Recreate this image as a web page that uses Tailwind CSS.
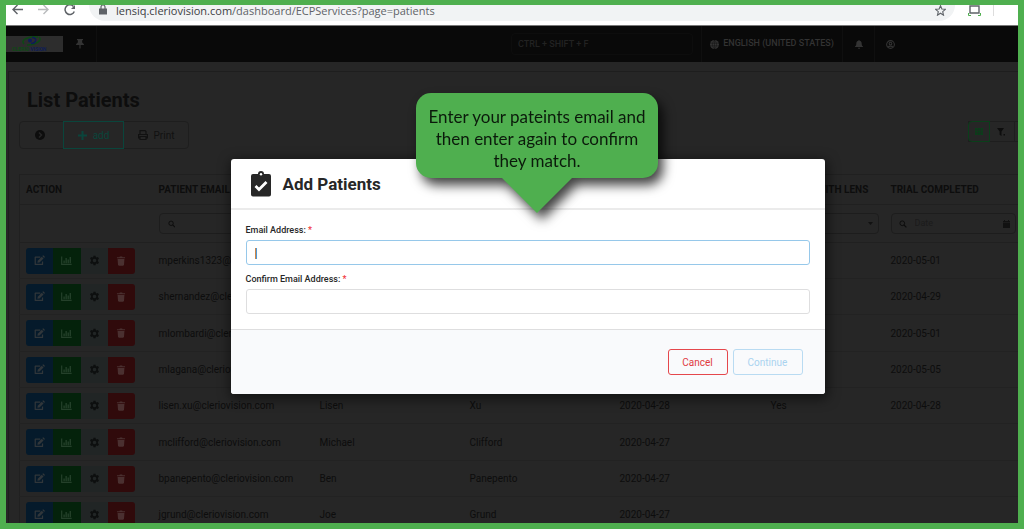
<!DOCTYPE html>
<html lang="en">

<head>
    <meta charset="UTF-8" />
    <meta name="viewport" content="width=device-width, initial-scale=1" />
    <title>List Patients</title>
    <script src="https://cdn.jsdelivr.net/npm/@tailwindcss/browser@4"></script>
</head>

<body class="relative flex h-screen flex-col overflow-hidden border-[6px] border-t-[5px] border-[#4faf4f] bg-[#262626] font-['Roboto',sans-serif] text-[#0d0d0d]">

    <!-- icons -->
    <svg class="hidden">
        <symbol id="i-edit" viewBox="0 0 16 16">
            <path d="M9.2 3.2H1.8v10.600h10.600V9.600" fill="none" stroke="currentColor" stroke-width="1.800" stroke-linejoin="round" />
            <path d="M5.400 8.300 11.300 2.400l2.600 2.600L8 10.900l-3 .4zM12.100 1.600l.7-.7c.4-.4 1-.4 1.400 0l1.200 1.200c.4.4.4 1 0 1.400l-.7.7z" fill="currentColor" />
        </symbol>
        <symbol id="i-chart" viewBox="0 0 16 16">
            <path d="M1 2v11.500h14.500" fill="none" stroke="currentColor" stroke-width="1.800" />
            <path d="M3.500 8h2v4h-2zM6.500 4.500h2V12h-2zM9.500 6.500h2V12h-2zM12.500 3h2v9h-2z" fill="currentColor" />
        </symbol>
        <symbol id="i-gear" viewBox="0 0 16 16">
            <path fill="currentColor" fill-rule="evenodd" d="M6.500 1h3l.4 1.900 1.200.7 1.900-.6 1.500 2.600L13 6.900v2.200l1.500 1.300-1.500 2.600-1.900-.6-1.200.7-.4 1.900h-3l-.4-1.900-1.200-.7-1.900.6-1.500-2.600L3 9.100V6.900L1.500 5.600 3 3l1.900.6 1.200-.7zM8 5.400a2.600 2.600 0 1 0 0 5.200 2.600 2.600 0 0 0 0-5.200z" />
        </symbol>
        <symbol id="i-trash" viewBox="0 0 16 16">
            <path fill="currentColor" d="M1.500 1.800h4l.6-1h3.800l.6 1h4v1.900h-13zM2.500 4.600h11l-.7 9.500c-.1.7-.7 1.300-1.500 1.300H4.700c-.8 0-1.400-.6-1.500-1.300z" />
        </symbol>
        <symbol id="i-search" viewBox="0 0 16 16">
            <circle cx="6.500" cy="6.500" r="4.700" fill="none" stroke="currentColor" stroke-width="2" />
            <path d="m10 10 4.800 4.800" stroke="currentColor" stroke-width="2.400" />
        </symbol>
    </svg>

    <!-- browser bar -->
    <div class="flex h-[21px] shrink-0 items-start border-b border-[#777] bg-white pl-[6px] text-[#5f6368]">
        <svg class="h-[11px] w-[11px]" viewBox="0 0 11 11" fill="none" stroke="#5f6368" stroke-width="1.400">
            <path d="M11 4.500H1M5.500 0 1 4.500 5.500 9" />
        </svg>
        <svg class="ml-[15px] h-[11px] w-[11px]" viewBox="0 0 11 11" fill="none" stroke="#b9bbbd" stroke-width="1.400">
            <path d="M0 4.500h10M5.500 0 10 4.500 5.500 9" />
        </svg>
        <svg class="ml-[15px] h-[11px] w-[12px]" viewBox="0 0 12 11" fill="none" stroke="#5f6368" stroke-width="1.500">
            <path d="M9.500 1.500A4.800 4.800 0 1 0 10.300 6.500" />
            <path d="M11 0v4H7z" fill="#5f6368" stroke="none" />
        </svg>
        <div class="ml-[13px] flex h-4 flex-1 items-start rounded-b-full bg-[#f1f3f4] pl-[10px] pr-[9px]">
            <svg class="h-[10px] w-[8px]" viewBox="0 0 8 10">
                <path fill="#5f6368" d="M0 3.500h8v6H0z" />
                <path d="M2 4V2a2 2 0 0 1 4 0v2" fill="none" stroke="#5f6368" stroke-width="1.200" />
            </svg>
            <p class="-mt-[2px] ml-[9px] flex-1 font-['Open_Sans',sans-serif] text-[11px] leading-[15px]"><span class="text-[#3c4043]">lensiq.cleriovision.com</span>/dashboard/ECPServices?page=patients</p>
            <svg class="h-[11px] w-[11px]" viewBox="0 0 12 12" fill="none" stroke="#5f6368" stroke-width="1.200">
                <path d="m6 .8 1.500 3.600 3.900.3-3 2.500.9 3.900L6 9l-3.300 2.100.9-3.900-3-2.500 3.900-.3z" />
            </svg>
        </div>
        <svg class="ml-[13px] h-[11px] w-[13px]" viewBox="0 0 13 11" fill="none">
            <path d="M2 1h9v7H2z" stroke="#5f6368" stroke-width="1.400" />
            <path d="M.5 8v2.500H3M12.500 8v2.500H10" stroke="#4faf4f" />
        </svg>
        <span class="ml-[12px] mr-[24px] h-[11px] w-px bg-[#ddd]"></span>
    </div>

    <!-- top navigation -->
    <nav class="flex h-9 shrink-0 items-center bg-[#090909] text-[9px] font-medium text-[#333]">
        <svg class="h-4 w-[57px] bg-[#2d2d2d]" viewBox="0 0 57 16">
            <g fill="none" stroke-width="1.500">
                <path d="M18 8C14 4 22 0 32 1" stroke="#0c4a14" />
                <path d="M33 1c4 3-3 8-12 8" stroke="#0c4a14" />
                <path d="M26 1.500c6 0 4 6-1 6" stroke="#0d1d58" />
            </g>
            <circle cx="24" cy="4.500" r="2" fill="#0d1d58" />
            <text x="6" y="15" font-size="5" font-weight="700" fill="#0c4a14">CLERIO <tspan fill="#0d1d58">VISION</tspan></text>
        </svg>
        <span class="flex h-full w-[34px] items-center justify-center border-r border-[#0f0f0f]">
            <svg class="h-[10px] w-[8px]" viewBox="0 0 8 10" fill="currentColor">
                <path d="M1 0h6v1.300H6l.3 2.500C7.300 4.300 8 5 8 6H4.600v3L4 10l-.6-1V6H0c0-1 .7-1.700 1.700-2.200L2 1.300H1z" />
            </svg>
        </span>
        <input type="text" aria-label="Search" placeholder="CTRL + SHIFT + F"
            class="ml-auto h-[22px] w-[182px] rounded-sm border border-[#0d0d0d] px-[6px] placeholder:text-[#222]" />
        <button class="ml-2 flex h-full w-[142px] items-center justify-center gap-1 whitespace-nowrap border-x border-[#0f0f0f]">
            <svg class="h-[9px] w-[9px] shrink-0" viewBox="0 0 10 10">
                <circle cx="5" cy="5" r="5" fill="currentColor" />
                <path d="M0 3.500h10M0 6.500h10M5 0v10M5 0C2 3 2 7 5 10M5 0c3 3 3 7 0 10" fill="none" stroke="#090909" stroke-width=".4" />
            </svg>
            ENGLISH (UNITED STATES)
        </button>
        <button aria-label="Notifications" class="flex h-full w-8 items-center justify-center border-r border-[#0f0f0f]">
            <svg class="h-[9px] w-2" viewBox="0 0 8 9" fill="currentColor">
                <path d="M4 0c.4 0 .6.300.6.700C6 1 6.700 2 6.700 3.500c0 1.800.5 2.300 1.300 3V7H0v-.5c.8-.7 1.300-1.200 1.300-3C1.300 2 2 1 3.400.700 3.400.300 3.600 0 4 0zM3 7.700h2C5 9.300 3 9.300 3 7.700z" />
            </svg>
        </button>
        <button aria-label="Account" class="mr-[123px] ml-[11px]">
            <svg class="h-[9px] w-[9px]" viewBox="0 0 10 10" fill="none" stroke="currentColor" stroke-width="1.200">
                <circle cx="5" cy="5" r="4.300" />
                <circle cx="5" cy="4" r="1.500" />
                <path d="M2.300 8C3 6.400 7 6.400 7.700 8" />
            </svg>
        </button>
    </nav>

    <!-- patients list -->
    <main class="mt-[9px] ml-[2px] flex-1 overflow-hidden border-t border-l border-[#1e1e1e] pl-[10px]">
        <h1 class="mt-[15px] ml-2 text-[20px] leading-[26px] font-bold">List Patients</h1>
        <div class="mt-2 flex items-start justify-between text-[10px] text-[#111]">
            <div class="flex h-7 rounded-sm border border-[#1e1e1e]">
                <button aria-label="Next" class="flex w-[43px] items-center justify-center pr-1">
                    <svg class="h-[10px] w-[10px]" viewBox="0 0 10 10">
                        <circle cx="5" cy="5" r="5" fill="#0d0d0d" />
                        <path d="M4 2.500 6.500 5 4 7.500" fill="none" stroke="#262626" stroke-width="1.500" />
                    </svg>
                </button>
                <button class="-my-px flex w-[61px] items-center justify-center gap-[6px] border border-[#0a453c] text-[#0a453c]">
                    <svg class="h-[9px] w-[9px]" viewBox="0 0 9 9" stroke="currentColor" stroke-width="2">
                        <path d="M4.500 0v9M0 4.500h9" />
                    </svg>
                    add
                </button>
                <button class="flex w-16 items-center justify-center gap-[6px]">
                    <svg class="h-[10px] w-[10px]" viewBox="0 0 10 10" fill="none" stroke="currentColor" stroke-width="1.200">
                        <path d="M2 4V.6h5L8 1.600V4M2 7.800H.6V4.500h8.800v3.300H8M2 6.500h6v3H2z" />
                    </svg>
                    Print
                </button>
            </div>
            <div class="flex h-[21px] border border-r-0 border-[#1e1e1e]">
                <button aria-label="Grid view" class="-m-px flex w-[22px] items-center justify-center rounded-l-sm border border-[#0a3f1a] text-[#0a3f1a]">
                    <svg class="h-[7px] w-2" viewBox="0 0 8 7">
                        <path fill="currentColor" d="M0 0h8v7H0z" />
                        <path d="M2.600 0v7M5.400 0v7M0 2.300h8M0 4.700h8" stroke="#262626" stroke-width=".5" />
                    </svg>
                </button>
                <button aria-label="Clear filter" class="flex w-[26px] items-center justify-center border-r border-[#1e1e1e]">
                    <svg class="h-2 w-[9px]" viewBox="0 0 9 8" fill="#0d0d0d">
                        <path d="M0 0h7L4.500 3.500V8L2.600 6.700V3.500zM6.500 6H8v1.500H6.500z" />
                    </svg>
                </button>
                <span class="w-[3px]"></span>
            </div>
        </div>

        <table class="mt-[25px] w-full table-fixed border-t border-l border-[#202020] text-left text-[10px]">
            <colgroup>
                <col class="w-[133px]" />
                <col class="w-[161px]" />
                <col class="w-[150px]" />
                <col class="w-[150px]" />
                <col class="w-[151px]" />
                <col class="w-[120px]" />
                <col />
            </colgroup>
            <thead>
                <tr class="h-[30px] border-b border-[#202020] whitespace-nowrap *:px-[6px] *:font-bold">
                    <th>ACTION</th>
                    <th>PATIENT EMAIL</th>
                    <th>FIRST NAME</th>
                    <th>LAST NAME</th>
                    <th>TRIAL START</th>
                    <th>SUCCESS WITH LENS</th>
                    <th>TRIAL COMPLETED</th>
                </tr>
                <tr class="h-[38px] border-b border-[#202020] *:px-[6px]">
                    <td></td>
                    <td>
                        <label class="flex h-[21px] items-center rounded-sm border border-[#1d1d1d] px-2">
                            <svg class="h-2 w-2"><use href="#i-search" /></svg>
                            <input type="text" aria-label="Filter by email" class="w-full" />
                        </label>
                    </td>
                    <td></td>
                    <td></td>
                    <td></td>
                    <td>
                        <div class="relative">
                            <select aria-label="Filter by lens" class="block h-[21px] w-full appearance-none rounded-sm border border-[#1d1d1d]">
                                <option></option>
                                <option>Yes</option>
                                <option>No</option>
                            </select>
                            <svg class="absolute top-[9px] right-[6px] h-[3px] w-[5px]" viewBox="0 0 5 3"><path d="M0 0h5L2.500 3z" fill="#111" /></svg>
                        </div>
                    </td>
                    <td class="pr-[2px]!">
                        <label class="flex h-[21px] items-center gap-2 rounded-sm border border-[#1d1d1d] pr-[5px] pl-[7px]">
                            <svg class="h-2 w-2 shrink-0"><use href="#i-search" /></svg>
                            <input type="text" placeholder="Date" aria-label="Filter by date" class="w-full min-w-0 text-[9px] placeholder:text-[#1b1b1b]" />
                            <svg class="h-2 w-[7px] shrink-0" viewBox="0 0 7 8"><path d="M0 1h1V0h1v1h3V0h1v1h1v1.200H0zM0 2.700h7V8H0z" fill="#111" /></svg>
                        </label>
                    </td>
                </tr>
            </thead>
            <tbody id="patients"></tbody>
        </table>
    </main>

    <!-- add patients dialog -->
    <div class="absolute inset-0 flex items-start justify-center pt-[154px] pl-[31px]">
        <form id="formAdd" role="dialog" aria-labelledby="dialogTitle" class="w-[594px] overflow-hidden rounded-[3px] bg-white text-[#272727] shadow-[1px_3px_12px_2px_rgba(0,0,0,0.5)]">
            <div class="flex h-[51px] items-center gap-3 border-b-2 border-[#ebebeb] pl-5">
                <svg class="h-[26px] w-5" viewBox="0 0 20 26">
                    <path fill="#272727" d="M2 3h5a3 3 0 0 1 6 0h5a2 2 0 0 1 2 2v18.500a2 2 0 0 1-2 2H2a2 2 0 0 1-2-2V5a2 2 0 0 1 2-2z" />
                    <circle cx="10" cy="3.300" r="1.200" fill="#fff" />
                    <path d="m4.500 15 3.500 3.500 7.500-7.500" fill="none" stroke="#fff" stroke-width="2.800" />
                </svg>
                <h2 id="dialogTitle" class="text-[17px] leading-6 font-bold">Add Patients</h2>
            </div>
            <div class="px-[15px] pt-[14px] pb-[15px] text-[9px] leading-3 font-medium">
                <label for="email" class="block">Email Address: <span class="align-top text-[#f03338]">*</span></label>
                <input type="text" id="email" value="|"
                    class="mt-1 block h-[25px] w-full rounded-[3px] border border-[#96c8ea] px-2 text-xs font-normal text-black focus:outline-none" />
                <label for="confirmEmail" class="mt-2 block">Confirm Email Address: <span class="align-top text-[#f03338]">*</span></label>
                <input type="text" id="confirmEmail"
                    class="mt-1 block h-[25px] w-full rounded-[3px] border border-[#dededf] px-2 text-xs font-normal focus:outline-none" />
            </div>
            <div class="flex justify-end gap-[5px] border-t border-[#dededf] bg-[#f9fafc] pt-[19px] pr-[22px] pb-[19px] text-[10px]">
                <button type="button" class="h-[26px] w-[60px] rounded-[3px] border border-[#e5474c] text-[#e0393e]">Cancel</button>
                <button type="submit" class="h-[26px] w-[70px] rounded-[3px] border border-[#b9dbf2] text-[#a9d3f0]">Continue</button>
            </div>
        </form>
    </div>

    <!-- hint bubble -->
    <div class="absolute top-[88px] left-[410px] w-[242px] drop-shadow-[5px_7px_6px_rgba(0,0,0,0.75)]">
        <p class="rounded-[15px] bg-[#4faf4f] px-2 pt-[13px] pb-[6px] text-center font-['Lato',sans-serif] text-[17px] leading-[22px] text-[#0b1a0b]">Enter your pateints email and<br />then enter again to confirm<br />they match.</p>
        <svg class="mx-auto -mt-px h-9 w-[72px]" viewBox="0 0 72 36"><path fill="#4faf4f" d="M0 0h72L36 36z" /></svg>
    </div>

    <script>
        const patients = [
            ['mperkins1323@cleriovision.com', '', '', '', '', '2020-05-01'],
            ['shernandez@cleriovision.com', '', '', '', '', '2020-04-29'],
            ['mlombardi@cleriovision.com', '', '', '', '', '2020-05-01'],
            ['mlagana@cleriovision.com', '', '', '', '', '2020-05-05'],
            ['lisen.xu@cleriovision.com', 'Lisen', 'Xu', '2020-04-28', 'Yes', '2020-04-28'],
            ['mclifford@cleriovision.com', 'Michael', 'Clifford', '2020-04-27', '', ''],
            ['bpanepento@cleriovision.com', 'Ben', 'Panepento', '2020-04-27', '', ''],
            ['jgrund@cleriovision.com', 'Joe', 'Grund', '2020-04-27', '', '']
        ];

        const actions = `
            <div class="flex h-[26px] w-[109px] overflow-hidden rounded-[3px] text-[#30363a] *:flex *:flex-1 *:items-center *:justify-center">
                <button aria-label="Edit" class="bg-[#051a2b]"><svg class="h-[11px] w-[11px]"><use href="#i-edit" /></svg></button>
                <button aria-label="Statistics" class="bg-[#04220b] text-[#24402a]"><svg class="h-[11px] w-[11px]"><use href="#i-chart" /></svg></button>
                <button aria-label="Settings" class="bg-[#212525] text-[#0d0f0f]"><svg class="h-[11px] w-[11px]"><use href="#i-gear" /></svg></button>
                <button aria-label="Delete" class="bg-[#300a0b] text-[#4a3030]"><svg class="h-[10px] w-[10px]"><use href="#i-trash" /></svg></button>
            </div>`;

        document.getElementById('patients').innerHTML = patients.map(row => `
            <tr class="h-9 border-b border-[#222] nth-[3n]:h-[37px] *:px-[6px]">
                <td>${actions}</td>
                ${row.map(cell => `<td>${cell}</td>`).join('')}
            </tr>`).join('');

        document.getElementById('formAdd').addEventListener('submit', function (e) {
            e.preventDefault();
        });
    </script>
</body>

</html>
